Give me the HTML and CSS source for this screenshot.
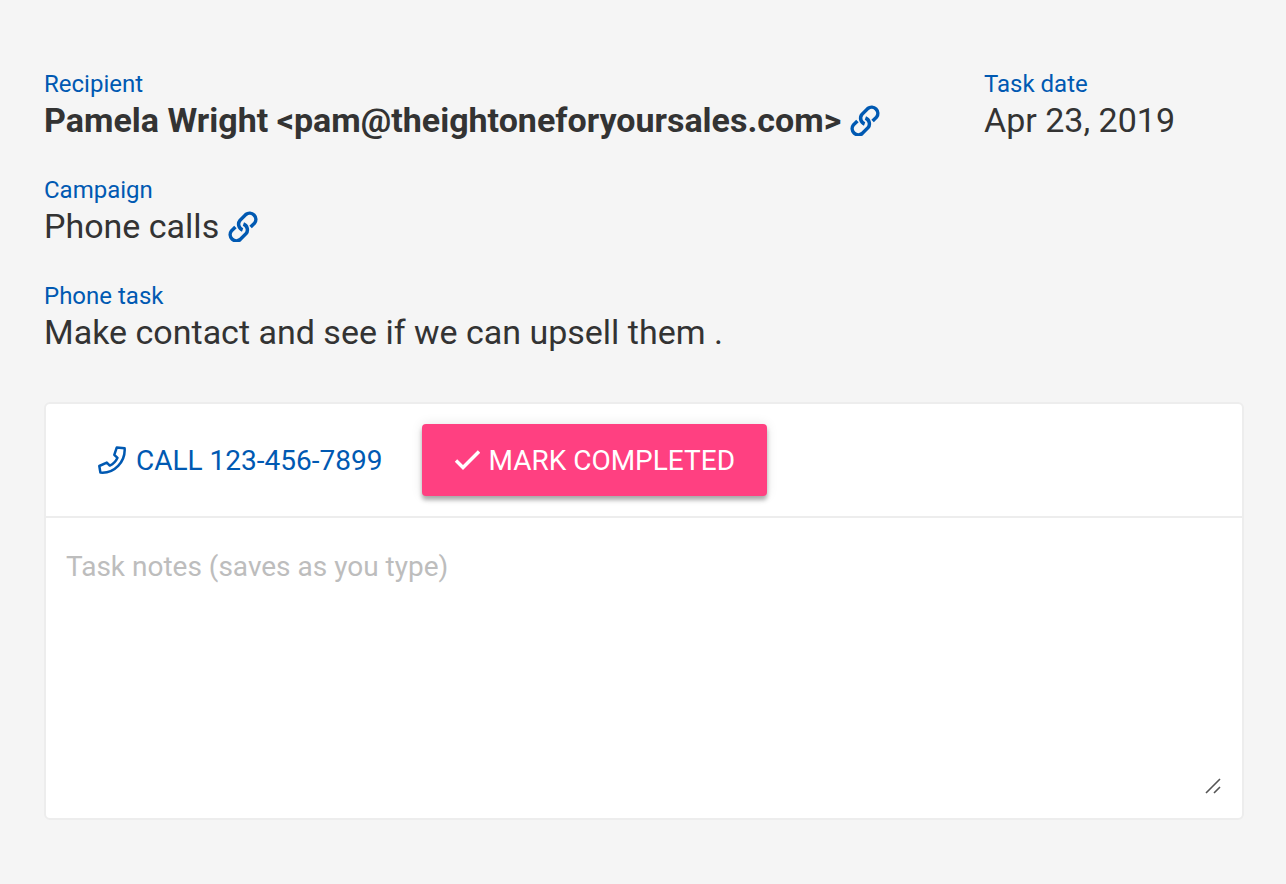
FILE: index.html
```html
<!DOCTYPE html>
<html lang="en">

<head>
  <meta charset="UTF-8" />
  <meta name="viewport" content="width=device-width, initial-scale=1.0" />
  <title>Phone task</title>
  <link rel="stylesheet" href="styles.css">
</head>

<body>
  <main class="task">
    <dl class="details">
      <div class="field">
        <dt>Recipient</dt>
        <dd>
          <strong>Pamela Wright &lt;pam@theightoneforyoursales.com&gt;</strong>
          <a href="#recipient" aria-label="Open recipient">
            <svg class="link-icon" viewBox="0 0 30 32">
              <path d="M22.6 17.1 L26.5 13.2 A6.2 6.2 0 0 0 17.8 4.5 L12 10.3 A6.2 6.2 0 0 0 14.6 20" />
              <path d="M7.4 16.9 L3.5 20.8 A6.2 6.2 0 0 0 12.2 29.5 L18 23.7 A6.2 6.2 0 0 0 15.4 14" />
            </svg>
          </a>
        </dd>
      </div>
      <div class="field">
        <dt>Task date</dt>
        <dd>Apr 23, 2019</dd>
      </div>
      <div class="field wide">
        <dt>Campaign</dt>
        <dd>
          Phone calls
          <a href="#campaign" aria-label="Open campaign">
            <svg class="link-icon" viewBox="0 0 30 32">
              <path d="M22.6 17.1 L26.5 13.2 A6.2 6.2 0 0 0 17.8 4.5 L12 10.3 A6.2 6.2 0 0 0 14.6 20" />
              <path d="M7.4 16.9 L3.5 20.8 A6.2 6.2 0 0 0 12.2 29.5 L18 23.7 A6.2 6.2 0 0 0 15.4 14" />
            </svg>
          </a>
        </dd>
      </div>
      <div class="field wide">
        <dt>Phone task</dt>
        <dd>Make contact and see if we can upsell them .</dd>
      </div>
    </dl>

    <section class="card">
      <div class="actions">
        <a class="btn" href="tel:123-456-7899">
          <svg class="phone-icon" viewBox="0 0 30 28">
            <path d="M18.8 1.4 L26.6 2.2 C27.6 15.5 16.5 27.8 2.4 26.6 L1.3 20 L8.8 16.6 L11.8 19.6 C15.3 18 18 15.2 19.5 11.8 L16.3 8.8 Z" />
          </svg>
          CALL 123-456-7899
        </a>
        <button class="btn btn-primary" type="button">
          <svg class="check-icon" viewBox="0 0 26 28">
            <path d="M2 14.5 L9 21.5 L25 5.5" />
          </svg>
          MARK COMPLETED
        </button>
      </div>
      <div class="notes">
        <textarea id="notes" name="notes" aria-label="Task notes" placeholder="Task notes (saves as you type)"></textarea>
        <svg class="grip" viewBox="0 0 16 16">
          <path d="M1 15 L15 1 M9 15 L15 9" />
        </svg>
      </div>
    </section>
  </main>
</body>

</html>
```

FILE: styles.css
```css
* {
  box-sizing: border-box;
}

body {
  margin: 0;
  background-color: #f5f5f5;
  color: #333;
  font-family: Roboto, sans-serif;
}

.task {
  padding: 70px 42px 64px 44px;
}

.details {
  display: grid;
  grid-template-columns: 1fr 260px;
  row-gap: 34px;
  margin: 0 0 48px;
}

.wide {
  grid-column: 1 / -1;
}

dt {
  color: #0059b2;
  font-size: 24px;
  line-height: 28px;
}

dd {
  display: flex;
  align-items: center;
  gap: 8px;
  margin: 0;
  font-size: 34px;
  line-height: 44px;
}

a {
  color: #0059b2;
  text-decoration: none;
}

svg {
  display: block;
  fill: none;
  stroke: currentColor;
}

.link-icon {
  width: 32px;
  height: 32px;
  stroke-width: 3.5;
}

/* Card */
.card {
  background: white;
  border: 2px solid #ededed;
  border-radius: 6px;
}

.actions {
  display: flex;
  gap: 8px;
  padding: 20px;
  border-bottom: 2px solid #ededed;
}

.btn {
  display: flex;
  align-items: center;
  gap: 8px;
  height: 72px;
  padding: 0 32px;
  border: none;
  border-radius: 4px;
  font-family: inherit;
  font-size: 28px;
}

.btn-primary {
  background-color: #ff4081;
  color: white;
  box-shadow: 0 4px 4px rgba(0, 0, 0, 0.3), 0 0 12px rgba(0, 0, 0, 0.1);
  cursor: pointer;
}

.phone-icon {
  width: 30px;
  height: 28px;
  stroke-width: 2.5;
  stroke-linejoin: round;
}

.check-icon {
  width: 26px;
  height: 28px;
  stroke-width: 3.4;
}

.notes {
  position: relative;
  padding: 20px;
}

textarea {
  display: block;
  width: 100%;
  height: 260px;
  padding: 12px 0;
  border: none;
  outline: none;
  resize: none;
  color: #333;
  font-family: inherit;
  font-size: 28px;
  line-height: 34px;
}

textarea::placeholder {
  color: #bdbdbd;
}

.grip {
  position: absolute;
  right: 21px;
  bottom: 24px;
  width: 16px;
  height: 16px;
  color: #555;
  stroke-width: 1.6;
}
```
